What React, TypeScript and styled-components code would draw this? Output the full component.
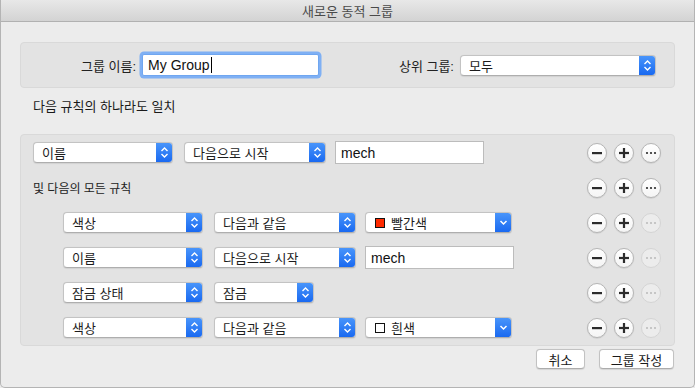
import React from 'react';
import styled, { createGlobalStyle } from 'styled-components';

const GlobalStyle = createGlobalStyle`
  html, body {
    margin: 0;
    padding: 0;
    background: #ececec;
  }
  * {
    box-sizing: border-box;
  }
`;

const font = `"Liberation Sans", "Noto Sans CJK KR", sans-serif`;

const Window = styled.div`
  width: 695px;
  height: 388px;
  display: flex;
  flex-direction: column;
  background: #ececec;
  border: 1px solid #b4b4b4;
  border-top: none;
  border-radius: 0 0 5px 5px;
  font-family: ${font};
  font-size: 13px;
  color: #1a1a1a;
  overflow: hidden;
`;

const TitleBar = styled.div`
  height: 22px;
  flex: none;
  display: flex;
  align-items: center;
  justify-content: center;
  background: linear-gradient(#e8e8e8, #d3d3d3);
  border-bottom: 1px solid #b1b1b1;
  color: #4a4a4a;
  font-size: 13px;
`;

const Content = styled.div`
  flex: 1;
  display: flex;
  flex-direction: column;
  padding: 20px 19px 0 19px;
`;

const Box = styled.div`
  background: #e3e3e3;
  border: 1px solid #d9d9d9;
  border-radius: 4px;
`;

const HeaderBox = styled(Box)`
  height: 46px;
  display: flex;
  align-items: center;
  padding: 0 18px 0 60px;
`;

const FieldLabel = styled.span`
  margin-right: 6px;
  color: #222;
`;

const TextField = styled.div<{ $width: number; $focused?: boolean; $height?: number }>`
  width: ${(p) => p.$width}px;
  height: ${(p) => p.$height ?? 23}px;
  display: flex;
  align-items: center;
  padding: 0 5px;
  background: #fff;
  border: 1px solid ${(p) => (p.$focused ? '#6fa6f0' : '#bcbcbc')};
  box-shadow: ${(p) => (p.$focused ? '0 0 0 2.5px #7fb0f4' : 'none')};
  border-radius: ${(p) => (p.$focused ? '2px' : '0')};
  font-size: 14px;
  color: #111;
`;

const Caret = styled.span`
  display: inline-block;
  width: 1px;
  height: 16px;
  background: #000;
  margin-left: 1px;
`;

const Spacer = styled.div`
  flex: 1;
`;

const Hint = styled.div`
  height: 46px;
  display: flex;
  align-items: flex-start;
  padding: 8px 0 0 13px;
  font-size: 13px;
  color: #1a1a1a;
`;

const RulesBox = styled(Box)`
  display: flex;
  flex-direction: column;
  padding: 0 13px 0 12px;
`;

const Row = styled.div<{ $indent?: boolean }>`
  height: 35px;
  display: flex;
  align-items: center;
  padding-left: ${(p) => (p.$indent ? 30 : 0)}px;
`;

const SelectBox = styled.div<{ $width: number; $gap?: number }>`
  width: ${(p) => p.$width}px;
  height: 21px;
  margin-right: ${(p) => p.$gap ?? 11}px;
  display: flex;
  background: #fff;
  border: 1px solid #c3c3c3;
  border-bottom-color: #aeaeae;
  border-radius: 4px;
  box-shadow: 0 0.5px 1px rgba(0, 0, 0, 0.08);
  overflow: hidden;
`;

const SelectText = styled.div`
  flex: 1;
  display: flex;
  align-items: center;
  padding-left: 8px;
  font-size: 13px;
  color: #1c1c1c;
  gap: 6px;
`;

const ArrowPart = styled.div`
  width: 17px;
  flex: none;
  display: flex;
  align-items: center;
  justify-content: center;
  background: linear-gradient(#4b97fb, #1767f0);
  margin: -1px -1px -1px 0;
`;

const Swatch = styled.span<{ $color: string }>`
  width: 10px;
  height: 10px;
  background: ${(p) => p.$color};
  border: 1px solid #111;
  margin-left: 1px;
`;

const SubLabel = styled.span`
  font-size: 12px;
  color: #222;
`;

const Actions = styled.div`
  margin-left: auto;
  display: flex;
  gap: 7px;
`;

const Round = styled.div<{ $disabled?: boolean }>`
  width: 20px;
  height: 20px;
  border-radius: 50%;
  display: flex;
  align-items: center;
  justify-content: center;
  background: ${(p) => (p.$disabled ? '#ececec' : 'linear-gradient(#ffffff, #f4f4f4)')};
  border: 1px solid ${(p) => (p.$disabled ? '#d4d4d4' : '#b5b5b5')};
  box-shadow: ${(p) => (p.$disabled ? 'none' : '0 0.5px 1px rgba(0,0,0,0.15)')};
`;

const Footer = styled.div`
  display: flex;
  justify-content: flex-end;
  gap: 14px;
  padding: 3px 1px 0 0;
`;

const PushButton = styled.div<{ $width: number }>`
  width: ${(p) => p.$width}px;
  height: 20px;
  display: flex;
  align-items: center;
  justify-content: center;
  background: #fff;
  border: 1px solid #c2c2c2;
  border-bottom-color: #acacac;
  border-radius: 4px;
  box-shadow: 0 0.5px 1px rgba(0, 0, 0, 0.1);
  font-size: 13px;
  color: #1a1a1a;
`;

function UpDown() {
  return (
    <svg width="9" height="13" viewBox="0 0 9 13">
      <path d="M1.5 5 L4.5 2 L7.5 5 M1.5 8 L4.5 11 L7.5 8" fill="none" stroke="#fff" strokeWidth="1.4" />
    </svg>
  );
}

function Down() {
  return (
    <svg width="9" height="7" viewBox="0 0 9 7">
      <path d="M1.5 2 L4.5 5 L7.5 2" fill="none" stroke="#fff" strokeWidth="1.5" />
    </svg>
  );
}

function Select({ label, width, popup, swatch, gap }: { label: string; width: number; popup?: boolean; swatch?: string; gap?: number }) {
  return (
    <SelectBox $width={width} $gap={gap}>
      <SelectText>
        {swatch && <Swatch $color={swatch} />}
        {label}
      </SelectText>
      <ArrowPart>{popup ? <Down /> : <UpDown />}</ArrowPart>
    </SelectBox>
  );
}

function RowActions({ moreDisabled }: { moreDisabled?: boolean }) {
  return (
    <Actions>
      <Round>
        <svg width="12" height="12" viewBox="0 0 12 12">
          <rect x="1" y="5" width="10" height="2.2" fill="#2b2b2b" />
        </svg>
      </Round>
      <Round>
        <svg width="12" height="12" viewBox="0 0 12 12">
          <rect x="1" y="4.9" width="10" height="2.2" fill="#2b2b2b" />
          <rect x="4.9" y="1" width="2.2" height="10" fill="#2b2b2b" />
        </svg>
      </Round>
      <Round $disabled={moreDisabled}>
        <svg width="12" height="4" viewBox="0 0 12 4">
          {[2, 6, 10].map((x) => (
            <circle key={x} cx={x} cy="2" r="1.1" fill={moreDisabled ? '#bdbdbd' : '#2b2b2b'} />
          ))}
        </svg>
      </Round>
    </Actions>
  );
}

export default function App() {
  return (
    <>
      <GlobalStyle />
      <Window>
        <TitleBar>새로운 동적 그룹</TitleBar>
        <Content>
          <HeaderBox>
            <FieldLabel>그룹 이름:</FieldLabel>
            <TextField $width={177} $height={22} $focused>
              My Group
              <Caret />
            </TextField>
            <Spacer />
            <FieldLabel>상위 그룹:</FieldLabel>
            <Select label="모두" width={196} gap={0} />
          </HeaderBox>
          <Hint>다음 규칙의 하나라도 일치</Hint>
          <RulesBox>
            <Row>
              <Select label="이름" width={140} />
              <Select label="다음으로 시작" width={142} gap={9} />
              <TextField $width={149}>mech</TextField>
              <RowActions />
            </Row>
            <Row>
              <SubLabel>및 다음의 모든 규칙</SubLabel>
              <RowActions />
            </Row>
            <Row $indent>
              <Select label="색상" width={140} />
              <Select label="다음과 같음" width={142} gap={9} />
              <Select label="빨간색" width={147} popup swatch="#ff2a00" gap={0} />
              <RowActions moreDisabled />
            </Row>
            <Row $indent>
              <Select label="이름" width={140} />
              <Select label="다음으로 시작" width={142} gap={9} />
              <TextField $width={149}>mech</TextField>
              <RowActions moreDisabled />
            </Row>
            <Row $indent>
              <Select label="잠금 상태" width={140} />
              <Select label="잠금" width={100} gap={0} />
              <RowActions moreDisabled />
            </Row>
            <Row $indent>
              <Select label="색상" width={140} />
              <Select label="다음과 같음" width={142} gap={9} />
              <Select label="흰색" width={147} popup swatch="#ffffff" gap={0} />
              <RowActions moreDisabled />
            </Row>
          </RulesBox>
          <Footer>
            <PushButton $width={49}>취소</PushButton>
            <PushButton $width={75}>그룹 작성</PushButton>
          </Footer>
        </Content>
      </Window>
    </>
  );
}
